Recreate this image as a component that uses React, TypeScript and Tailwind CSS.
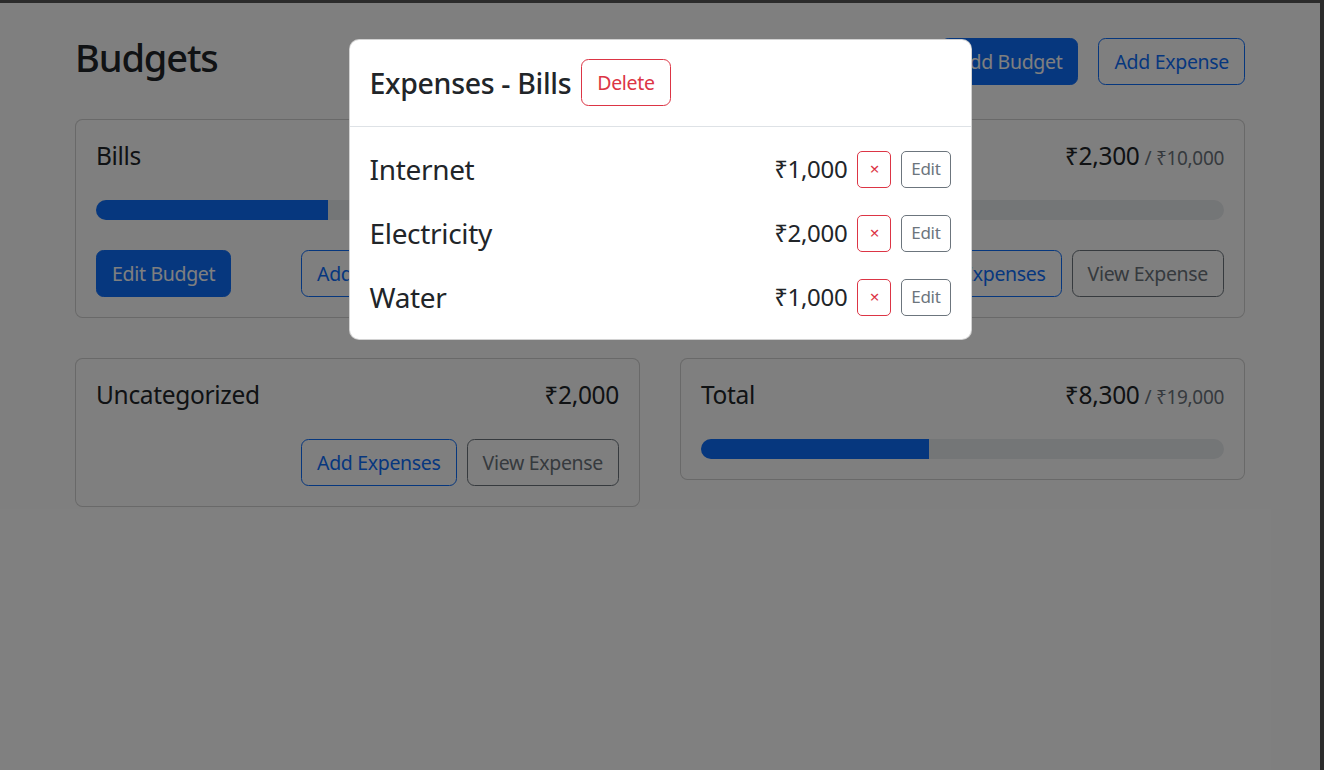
const BLUE = 'bg-[#0d6efd]'

type Budget = {
  name: string
  amount: string
  max?: string
  ratio?: number
  editable?: boolean
}

const BUDGETS: Budget[] = [
  { name: 'Bills', amount: '₹4,000', max: '₹9,000', ratio: 4000 / 9000, editable: true },
  { name: 'Groceries', amount: '₹2,300', max: '₹10,000', ratio: 0.23, editable: true },
  { name: 'Uncategorized', amount: '₹2,000' },
]

const EXPENSES = [
  { description: 'Internet', amount: '₹1,000' },
  { description: 'Electricity', amount: '₹2,000' },
  { description: 'Water', amount: '₹1,000' },
]

const BTN = 'h-[47px] px-[15px] text-[19.5px] leading-[30px] rounded-[7.5px] border'

function BudgetCard({ budget, hideButtons }: { budget: Budget; hideButtons?: boolean }) {
  return (
    <div className="border border-black/[0.175] rounded-[7.5px] p-[20px] bg-white">
      <div className="flex justify-between items-start h-[40px] mb-[20px] text-[24.5px] leading-[30px] pt-[1px]">
        <div className="me-[10px]">{budget.name}</div>
        <div className="flex items-baseline">
          {budget.amount}
          {budget.max && (
            <span className="text-[19px] text-[#6c757d] ms-[5px]">/ {budget.max}</span>
          )}
        </div>
      </div>
      {budget.ratio !== undefined && (
        <div className="h-[20px] rounded-full bg-[#e9ecef] overflow-hidden">
          <div className={`h-full ${BLUE}`} style={{ width: `${budget.ratio * 100}%` }} />
        </div>
      )}
      {!hideButtons && (
        <div className={`flex items-center gap-[10px] ${budget.ratio !== undefined ? 'mt-[30px]' : ''}`}>
          {budget.editable && (
            <button className={`${BTN} border-[#0d6efd] ${BLUE} text-white`}>Edit Budget</button>
          )}
          <button className={`${BTN} ms-auto border-[#0d6efd] text-[#0d6efd]`}>Add Expenses</button>
          <button className={`${BTN} border-[#6c757d] text-[#6c757d]`}>View Expense</button>
        </div>
      )}
    </div>
  )
}

function ExpensesModal() {
  return (
    <div className="mx-auto mt-[36px] w-[623px] bg-white border border-black/[0.175] rounded-[10px]">
      <div className="flex items-center gap-[10px] px-[20px] pt-[19px] pb-[20px] border-b border-[#dee2e6]">
        <div className="text-[28.5px] leading-[36px] font-medium">Expenses - Bills</div>
        <button className={`${BTN} border-[#dc3545] text-[#dc3545]`}>Delete</button>
      </div>
      <div className="flex flex-col gap-[20px] p-[20px]">
        {EXPENSES.map((e) => (
          <div key={e.description} className="flex items-center gap-[10px] h-[44px]">
            <div className="me-auto text-[28px] leading-[44px]">{e.description}</div>
            <div className="text-[24px] leading-[30px]">{e.amount}</div>
            <button className="h-[37px] w-[34px] text-[17px] leading-[26px] rounded-[5px] border border-[#dc3545] text-[#dc3545]">
              ×
            </button>
            <button className="h-[37px] px-[9px] text-[17px] leading-[26px] rounded-[5px] border border-[#6c757d] text-[#6c757d]">
              Edit
            </button>
          </div>
        ))}
      </div>
    </div>
  )
}

export default function App() {
  return (
    <div className="h-screen bg-[#2b2b2b] pt-[3px] pr-[4px] font-['Noto_Sans',sans-serif] tracking-[-0.02em] text-[#212529]">
      <div className="relative h-full bg-white overflow-hidden">
        <div className="mx-auto w-[1170px] pt-[30px]">
          {/* header */}
          <div className="flex items-start mb-[34px]">
            <h1 className="me-auto text-[38px] leading-[48px] font-medium tracking-[-0.03em]">Budgets</h1>
            <div className="flex gap-[20px] mt-[5px]">
              <button className={`${BTN} border-[#0d6efd] ${BLUE} text-white`}>Add Budget</button>
              <button className={`${BTN} border-[#0d6efd] text-[#0d6efd]`}>Add Expense</button>
            </div>
          </div>

          {/* cards */}
          <div className="grid grid-cols-2 gap-[40px] items-start">
            {BUDGETS.map((b) => (
              <BudgetCard key={b.name} budget={b} />
            ))}
            <BudgetCard budget={{ name: 'Total', amount: '₹8,300', max: '₹19,000', ratio: 8300 / 19000 }} hideButtons />
          </div>
        </div>

        {/* modal backdrop + dialog */}
        <div className="absolute inset-0 bg-black/50" />
        <div className="absolute inset-0">
          <ExpensesModal />
        </div>
      </div>
    </div>
  )
}
